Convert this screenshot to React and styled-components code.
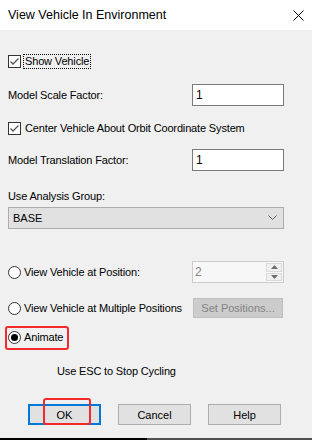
import styled, { createGlobalStyle } from "styled-components";

const GlobalStyle = createGlobalStyle`
  html, body {
    margin: 0;
    padding: 0;
    width: 312px;
    height: 440px;
    overflow: hidden;
    background: #f0f0f0;
  }
  * {
    box-sizing: border-box;
  }
`;

export default function App() {
  return (
    <>
      <GlobalStyle />
      <Dialog>
        <TitleBar>
          <Title>View Vehicle In Environment</Title>
          <CloseIcon width="11" height="11" viewBox="0 0 11 11">
            <path d="M0.5 0.5 L10.5 10.5 M10.5 0.5 L0.5 10.5" stroke="#000" strokeWidth="1" />
          </CloseIcon>
        </TitleBar>

        <Body>
          <Row $mt={20}>
            <CheckBox />
            <Focus>Show Vehicle</Focus>
          </Row>

          <Row $mt={12} $between>
            <Label>Model Scale Factor:</Label>
            <TextInput>1</TextInput>
          </Row>

          <Row $mt={11}>
            <CheckBox />
            <Label $ml={4}>Center Vehicle About Orbit Coordinate System</Label>
          </Row>

          <Row $mt={10} $between>
            <Label>Model Translation Factor:</Label>
            <TextInput>1</TextInput>
          </Row>

          <Row $mt={14}>
            <Label>Use Analysis Group:</Label>
          </Row>

          <Combo>
            <span>BASE</span>
            <svg width="9" height="6" viewBox="0 0 9 6">
              <path d="M0.5 0.5 L4.5 4.5 L8.5 0.5" fill="none" stroke="#606060" strokeWidth="1" />
            </svg>
          </Combo>

          <Row $mt={32} $between>
            <Option>
              <Radio />
              <Label $ml={3}>View Vehicle at Position:</Label>
            </Option>
            <Spinner>
              <SpinValue>2</SpinValue>
              <SpinButtons>
                <SpinBtn>
                  <svg width="7" height="4" viewBox="0 0 7 4">
                    <path d="M0 4 L3.5 0 L7 4 Z" fill="#6d6d6d" />
                  </svg>
                </SpinBtn>
                <SpinBtn>
                  <svg width="7" height="4" viewBox="0 0 7 4">
                    <path d="M0 0 L3.5 4 L7 0 Z" fill="#6d6d6d" />
                  </svg>
                </SpinBtn>
              </SpinButtons>
            </Spinner>
          </Row>

          <Row $mt={14} $between>
            <Option>
              <Radio />
              <Label $ml={3}>View Vehicle at Multiple Positions</Label>
            </Option>
            <DisabledButton>Set Positions...</DisabledButton>
          </Row>

          <Row $mt={7}>
            <Highlight $top={0} $left={-3} $w={64} $h={24} />
            <Radio $checked />
            <Label $ml={3}>Animate</Label>
          </Row>

          <Row $mt={12}>
            <Label $ml={49}>Use ESC to Stop Cycling</Label>
          </Row>

          <Buttons>
            <ButtonWrap>
              <Button $default>OK</Button>
              <Highlight $top={-6} $left={15} $w={48} $h={27} />
            </ButtonWrap>
            <Button>Cancel</Button>
            <Button>Help</Button>
          </Buttons>
        </Body>

        <BottomEdge />
      </Dialog>
    </>
  );
}

function CheckBox() {
  return (
    <Box>
      <svg width="11" height="11" viewBox="0 0 11 11">
        <path d="M1.5 5.5 L4 8 L9.5 2.5" fill="none" stroke="#555" strokeWidth="1.3" />
      </svg>
    </Box>
  );
}

const Dialog = styled.div`
  width: 312px;
  height: 440px;
  display: flex;
  flex-direction: column;
  background: #f0f0f0;
  font-family: "Liberation Sans", Arial, sans-serif;
  color: #000;
  position: relative;
`;

const TitleBar = styled.div`
  height: 30px;
  background: #fff;
  display: flex;
  align-items: center;
  justify-content: space-between;
  padding: 0 8px 0 8px;
`;

const Title = styled.div`
  font-size: 12.5px;
  color: #000;
  margin-top: -1px;
`;

const CloseIcon = styled.svg`
  margin-right: 0px;
  margin-top: 0px;
`;

const Body = styled.div`
  flex: 1;
  display: flex;
  flex-direction: column;
  padding: 0 28px 0 8px;
`;

const Row = styled.div`
  position: relative;
  height: 22px;
  margin-top: ${({ $mt }) => $mt || 0}px;
  display: flex;
  align-items: center;
  justify-content: ${({ $between }) => ($between ? "space-between" : "flex-start")};
`;

const Option = styled.div`
  display: flex;
  align-items: center;
`;

const Label = styled.span`
  font-size: 11px;
  letter-spacing: -0.15px;
  margin-left: ${({ $ml }) => $ml || 0}px;
  white-space: nowrap;
`;

const Box = styled.span`
  width: 13px;
  height: 13px;
  border: 1px solid #333;
  background: #fff;
  display: flex;
  align-items: center;
  justify-content: center;
`;

const Focus = styled.span`
  font-size: 11px;
  letter-spacing: -0.15px;
  margin-left: 2px;
  padding: 0 1px;
  line-height: 13px;
  border: 1px dotted #000;
  white-space: nowrap;
`;

const Radio = styled.span`
  width: 13px;
  height: 13px;
  border-radius: 50%;
  border: 1px solid #333;
  background: #fff;
  display: flex;
  align-items: center;
  justify-content: center;

  &::after {
    content: "";
    width: 7px;
    height: 7px;
    border-radius: 50%;
    background: #000;
    display: ${({ $checked }) => ($checked ? "block" : "none")};
  }
`;

const TextInput = styled.div`
  width: 92px;
  height: 22px;
  border: 1px solid #7a7a7a;
  background: #fff;
  font-size: 12px;
  padding: 2px 3px;
  line-height: 16px;
`;

const Combo = styled.div`
  height: 22px;
  border: 1px solid #adadad;
  background: #e1e1e1;
  display: flex;
  align-items: center;
  justify-content: space-between;
  padding: 0 6px 0 4px;
  font-size: 11px;
`;

const Spinner = styled.div`
  width: 92px;
  height: 22px;
  border: 1px solid #cccccc;
  background: #f7f7f7;
  display: flex;
`;

const SpinValue = styled.div`
  flex: 1;
  font-size: 12px;
  color: #838383;
  padding: 2px 2px;
  line-height: 16px;
`;

const SpinButtons = styled.div`
  width: 17px;
  display: flex;
  flex-direction: column;
  gap: 1px;
  padding: 1px 1px 1px 0;
`;

const SpinBtn = styled.div`
  flex: 1;
  background: #f0f0f0;
  border: 1px solid #dadada;
  display: flex;
  align-items: center;
  justify-content: center;
`;

const DisabledButton = styled.div`
  width: 90px;
  height: 20px;
  margin-right: 1px;
  background: #cccccc;
  border: 1px solid #bfbfbf;
  color: #838383;
  font-size: 11px;
  display: flex;
  align-items: center;
  justify-content: center;
`;

const Buttons = styled.div`
  margin-top: 22px;
  padding-left: 20px;
  display: flex;
  gap: 17px;
`;

const ButtonWrap = styled.div`
  position: relative;
  display: flex;
`;

const Button = styled.div`
  width: 73px;
  height: 21px;
  background: #e1e1e1;
  border: ${({ $default }) => ($default ? "2px solid #0078d7" : "1px solid #adadad")};
  font-size: 11px;
  display: flex;
  align-items: center;
  justify-content: center;
`;

const Highlight = styled.div`
  position: absolute;
  top: ${({ $top }) => $top}px;
  left: ${({ $left }) => $left}px;
  width: ${({ $w }) => $w}px;
  height: ${({ $h }) => $h}px;
  border: 2px solid #f42a2a;
  border-radius: 3px;
  pointer-events: none;
`;

const BottomEdge = styled.div`
  height: 2px;
  margin-bottom: 0;
  background: linear-gradient(to right, #000 0, #000 147px, #505050 147px);
`;
